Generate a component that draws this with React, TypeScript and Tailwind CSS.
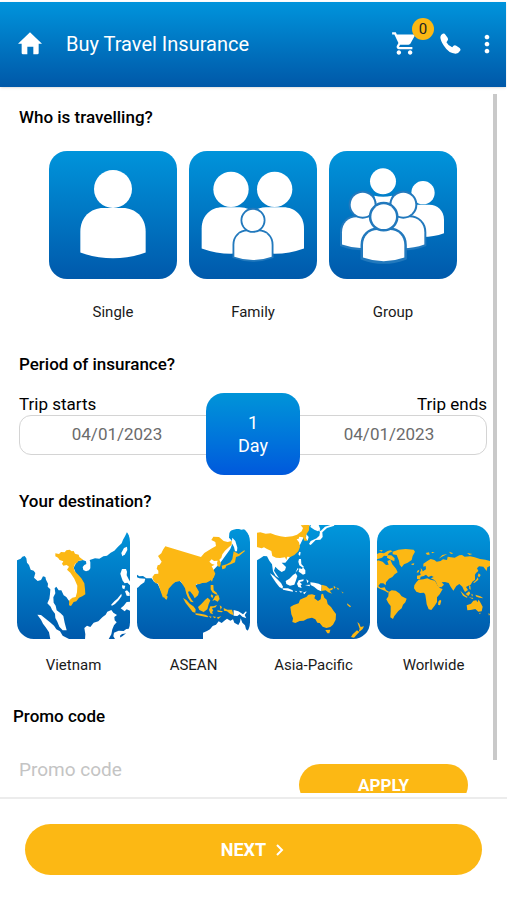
import React, { useState } from 'react';
import { MdMoreVert, MdShoppingCart } from 'react-icons/md';

const YELLOW = '#fcb814';
const OUTLINE = '#2279bd';

type PersonProps = {
  cx: number;
  headY: number;
  r: number;
  top: number;
  half: number;
  bottom: number;
  outline?: number;
};

function Person({ cx, headY, r, top, half, bottom, outline = 0 }: PersonProps) {
  const flat = half * 0.3;
  const shoulder = top + half * 0.72;
  const body = `M${cx - half} ${bottom - half * 0.18}V${shoulder}C${cx - half} ${top + half * 0.28} ${cx - half * 0.68} ${top} ${cx - flat} ${top}H${cx + flat}C${cx + half * 0.68} ${top} ${cx + half} ${top + half * 0.28} ${cx + half} ${shoulder}V${bottom - half * 0.18}Q${cx} ${bottom + half * 0.18} ${cx - half} ${bottom - half * 0.18}Z`;
  return (
    <g fill="#fff" stroke={OUTLINE} strokeWidth={outline} style={{ paintOrder: 'stroke' }}>
      <path d={body} />
      <circle cx={cx} cy={headY} r={r} />
    </g>
  );
}

const TRAVELLERS = [
  {
    label: 'Single',
    art: (
      <svg viewBox="28 32 384 384" className="block w-full">
        <Person cx={220} headY={146} r={57} top={203} half={98} bottom={354} />
      </svg>
    ),
  },
  {
    label: 'Family',
    art: (
      <svg viewBox="448 32 384 384" className="block w-full">
        <Person cx={574} headY={147} r={53} top={201} half={88} bottom={340} />
        <Person cx={705} headY={147} r={53} top={201} half={88} bottom={340} />
        <Person cx={640} headY={240} r={32} top={273} half={56} bottom={359} outline={11} />
      </svg>
    ),
  },
  {
    label: 'Group',
    art: (
      <svg viewBox="238 32 384 384" className="block w-full">
        <circle cx="400" cy="123" r="39" fill="#fff" />
        <path d="M374 166Q400 172 427 166L422 192H379Z" fill="#fff" />
        <Person cx={520} headY={157} r={35} top={193} half={63} bottom={290} />
        <Person cx={339} headY={193} r={36} top={231} half={62} bottom={324} outline={12} />
        <Person cx={461} headY={193} r={36} top={231} half={63} bottom={324} outline={12} />
        <Person cx={402} headY={229} r={37} top={269} half={62} bottom={363} outline={15} />
      </svg>
    ),
  },
];

const DESTINATIONS = [
  {
    label: 'Vietnam',
    art: (
      <>
        <path
          fill="#fff"
          d="M14 26H362V64L358 66 356 56 350 53 344 66 338 76 334 87 323 97 312 109 301 115 290 124 279 126 267 133 254 132 245 135 238 137 240 144 240 162 236 168 227 171 219 167 217 158 222 152 228 149 227 141 217 137 200 141 190 160 202 190 215 212 200 246 180 264 174 257 168 248 160 243 153 228 145 228 138 217 133 222 135 237 129 249 130 265 136 274 139 288 150 296 159 305 163 325 169 348 157 348 147 337 141 322 135 311 134 298 125 286 121 277 111 267 117 253 119 239 120 225 112 217 113 208 107 196 105 188 98 186 92 197 82 200 71 190 75 176 70 169 61 166 56 152 50 145 48 132 43 125 36 127 31 133 14 140Z"
        />
        <path
          fill={YELLOW}
          d="M135 117 146 119 152 113 163 114 168 108 178 106 184 111 190 110 194 118 205 121 207 128 219 137 205 139 200 146 194 148 190 160 193 171 205 183 214 193 222 207 224 224 225 240 216 246 206 250 198 261 190 263 182 275 176 273 177 258 186 250 196 248 200 234 201 214 192 193 180 175 170 166 176 157 169 152 159 154 155 148 159 141 148 137 143 130 135 126Z"
        />
        <g fill="#fff">
          <path d="M81 301 92 302 104 312 119 324 131 334 138 345 149 351 157 364 178 375H120L116 354 106 339 98 328 92 316Z" />
          <path d="M222 341 230 334 240 338 250 325 264 321 276 309 286 301 291 292 303 287 309 295 320 302 312 308 313 318 319 324 311 333 306 345 303 360 294 376H224L225 360Z" />
          <path d="M311 355 325 349 340 350 348 344 357 343 362 350 350 357 335 359 329 364 331 377H316L309 366Z" />
          <path d="M335 164 347 164 350 172 349 183 355 195 362 207V216L351 205 343 207 337 199 333 188 330 178Z" />
          <path d="M302 272 312 261 321 253 333 238 334 245 325 258 314 269 305 274Z" />
          <path d="M335 213 345 214 342 225 336 222ZM344 231 350 228 358 236V245L349 244ZM331 282 340 274 349 263 361 262V290L349 285 343 291Z" />
          <path d="M336 126 333 116 341 101 350 97 351 107 344 120Z" />
        </g>
      </>
    ),
  },
  {
    label: 'ASEAN',
    art: (
      <>
        <path
          fill="#fff"
          d="M14 26H312L304 45 297 56 296 70 303 78 307 85 300 104 270 145 235 182 205 208 182 218 160 212 148 199 137 201 118 211 108 222 96 238 82 208 71 202 64 192 48 192 38 185 27 186 18 180V188L27 192 45 193 42 204 31 211 24 219 14 224Z"
        />
        <path fill="#fff" d="M306 26H362V66L356 62 350 48 342 45 333 46 326 44 318 44 309 46 299 50 294 64Z" />
        <path fill="#fff" d="M306 70 315 80 321 100 320 111 314 111 311 98 304 85Z" />
        <path
          fill={YELLOW}
          d="M105 96 212 128 222 116 245 102 257 95 255 83 243 77 249 67 266 68 280 80 292 83 304 80 304 91 293 101 284 109 276 120 273 130 267 136 272 147 269 157 262 156 260 146 262 139 251 140 244 135 237 142 245 149 253 151 244 156 249 165 255 178 250 190 238 200 228 205 216 206 206 210 198 208 196 215 206 232 203 243 193 252 188 242 179 231 173 232 177 245 184 256 190 264 181 262 173 250 168 238 164 222 158 212 150 200 135 203 127 210 115 223 111 240 98 250 92 234 87 218 83 207 76 207 69 198 66 188 73 179 84 178 84 169 79 163 82 153 88 151 94 142 83 125 93 117 98 106Z"
        />
        <path fill={YELLOW} d="M98 245 106 240 112 247 109 256 105 254Z" />
        <g fill={YELLOW}>
          <path d="M310 111 325 119 342 108 344 110 326 125 317 128 314 144 301 150 288 154 285 162 276 165 274 154 289 150 300 144 306 134Z" />
          <path d="M245 188 249 189 245 202 241 196ZM241 212 249 212 250 228 259 235 262 242 254 239 246 234 241 225ZM243 240 249 244 246 252 241 245ZM255 244 264 242 268 254 262 262 253 257 246 260Z" />
          <path d="M158 251 168 257 178 268 189 276 196 285 195 295 187 293 176 279 166 266Z" />
          <path d="M203 278 213 269 224 257 232 250 240 258 235 270 231 285 220 293 207 287Z" />
          <path d="M195 297 210 298 225 301 234 306 231 309 210 304 196 301ZM235 305 244 307 241 311ZM247 306 258 308 252 312ZM260 309 273 306 263 315Z" />
          <path d="M240 276 249 276 260 272 256 279 245 281 249 290 245 292 248 300 240 297 236 286ZM268 273 275 278 271 286ZM280 281 291 286 305 286 310 303 300 299 290 291 281 289ZM261 288 278 291 274 294 262 292Z" />
        </g>
        <path fill="#fff" d="M310 287 324 291 338 300 347 291 349 294 343 302 348 312 336 307 328 300 321 305 310 304Z" />
        <path
          fill="#fff"
          d="M218 378V355L230 350 239 345 247 335 257 331 265 321 274 326 282 319 290 313 300 319 308 315 312 325 324 332 329 323 331 312 336 325 344 333 347 345 356 352 362 350V378Z"
        />
      </>
    ),
  },
  {
    label: 'Asia-Pacific',
    art: (
      <>
        <path fill="#fff" d="M14 26H182L170 48 150 90 105 145 94 145 107 158 104 168 94 173 84 166 75 157 71 169 79 181 86 192 76 185 68 171 65 150 57 139 50 126 40 125 30 132 14 141Z" />
        <path
          fill={YELLOW}
          d="M14 56 30 54 46 58 61 57 75 62 90 66 105 68 126 66 140 61 154 51 158 41 151 33 177 31 176 48 170 57 166 66 171 72 171 79 162 79 158 69 147 67 145 73 139 75 146 84 149 97 144 111 132 122 120 128 111 127 108 137 104 129 89 131 77 130 66 125 63 110 50 104 41 99 34 102 22 99 14 94Z"
        />
        <g fill="#fff">
          <path d="M183 26H198L205 32 210 45 203 51 192 46 180 38ZM168 60 175 68 172 79 167 72Z" />
          <path d="M203 45 211 50 224 37 250 29 252 34 230 41 216 54 217 68 210 76 196 77 187 86 181 92 176 89 181 80 199 72 207 64 209 53Z" />
          <path d="M147 112 151 114 149 125 144 120ZM146 134 152 134 153 149 161 158 158 160 147 153 144 142ZM147 162 155 164 158 159 165 168 165 178 158 181 151 176 145 172ZM142 161 145 164 135 175Z" />
          <path d="M59 177 70 184 81 195 92 206 98 217 96 223 87 218 77 205 67 190Z" />
          <path d="M106 200 117 193 128 182 136 177 141 185 137 198 132 211 119 214 108 209Z" />
          <path d="M97 222 113 222 127 228 128 232 112 229 98 226ZM133 229 140 231 138 234ZM146 229 157 232 151 235ZM158 235 169 231 162 240Z" />
          <path d="M145 198 160 195 159 200 148 203 155 210 151 213 154 221 144 218 140 208ZM168 195 175 200 171 207ZM164 212 179 211 178 216ZM180 204 192 205 205 208 214 213 213 231 202 226 191 217 181 212Z" />
        </g>
        <g fill={YELLOW}>
          <path d="M214 211 228 215 237 223 248 220 246 226 238 229 245 238 234 234 226 228 213 230ZM250 214 256 219 251 224ZM258 219 267 224 263 226ZM273 231 280 236 277 237ZM290 267 302 276 299 279 291 272Z" />
          <path d="M120 278 130 272 145 267 149 256 160 251 168 248 174 241 185 240 195 243 192 252 203 260 211 255 213 240 218 238 222 250 229 256 232 269 242 278 250 290 257 299 256 316 248 331 240 338 228 341 217 337 208 326 201 325 195 315 185 310 171 313 160 319 148 320 135 326 126 323 128 312 123 300Z" />
          <path d="M225 347 240 346 237 357 231 357Z" />
          <path d="M321 323 327 328 331 338 341 336 337 344 330 350 325 352 328 343ZM320 348 327 353 319 361 311 370 302 368 307 360Z" />
        </g>
      </>
    ),
  },
  {
    label: 'Worlwide',
    art: (
      <g fill={YELLOW}>
        <path d="M14 143 23 138 37 142 47 152 55 151 51 140 60 136 66 150 77 163 82 174 73 180 66 188 56 193 47 204 46 213 39 207 30 207 24 215 31 221 43 219 47 227 56 232 53 235 43 229 30 224 14 216Z" />
        <path d="M14 122 28 115 41 117 52 110 60 108 67 111 56 116 50 125 41 124 35 130 20 135 14 132ZM51 122 63 123 73 132 72 141 61 136 50 130ZM26 108 37 107 34 112Z" />
        <path d="M67 112 84 106 106 104 130 106 134 112 127 125 124 137 112 145 101 150 94 159 88 151 86 139 79 122 67 120ZM124 148 132 147 130 152 123 151Z" />
        <path d="M55 233 64 228 76 229 87 237 94 246 109 253 105 264 98 271 94 282 84 290 77 299 72 305 68 314 60 309 61 291 61 275 54 266 48 255 54 246Z" />
        <path d="M138 204 145 196 159 195 171 192 181 196 194 199 202 214 210 222 217 224 208 240 200 249 200 263 193 274 183 287 175 285 169 270 167 255 165 241 161 235 149 236 138 232 131 222 132 213ZM209 256 213 259 209 273 203 271 204 262Z" />
        <path d="M140 194 140 184 151 182 149 174 159 170 167 165 166 155 159 157 159 148 171 140 181 134 192 137 199 142 211 140 218 135 230 137 232 127 242 129 253 130 267 123 275 122 283 127 299 126 313 129 329 134 345 136 362 141V154L351 159 349 170 339 157 326 156 320 162 324 170 317 176 310 187 314 181 314 196 306 202 301 211 294 214 287 218 293 227 284 233 280 226 276 217 267 209 258 215 249 229 241 217 235 206 224 203 214 204 221 211 213 219 203 217 196 201 191 196 181 192 190 188 183 184 174 188 167 181 160 185 151 187 149 195Z" />
        <path d="M151 161 156 167 157 174 149 175 152 168ZM141 169 147 166 145 174 139 175ZM205 133 216 122 231 119 215 127ZM166 116 176 114 178 121 170 121ZM183 113 193 113 186 117ZM236 112 249 117 242 119ZM290 116 306 119 297 122Z" />
        <path d="M325 177 331 182 327 189 322 185ZM323 188 324 196 313 205 308 205 317 197ZM296 213 300 215 301 226 297 224ZM270 229 283 242 292 248 289 250 278 244ZM286 239 296 231 300 237 294 245ZM295 249 309 251 307 254ZM303 238 308 241 305 247ZM315 241 330 246 339 252 328 250 318 247Z" />
        <path d="M289 273 302 268 309 259 318 258 321 264 325 256 331 266 337 277 334 291 324 292 315 284 301 287 291 288ZM326 296 331 295 329 300ZM354 297 359 299 356 304Z" />
      </g>
    ),
  },
];

function TravellerTile({ label, art }: { label: string; art: React.ReactNode }) {
  return (
    <button type="button" className="flex w-32 flex-col items-center gap-[22px] text-[15px] leading-[22px] text-[#1a1a1a]">
      <span className="block w-full overflow-hidden rounded-[18px] bg-linear-to-b from-[#0094db] to-[#0059ab]">{art}</span>
      {label}
    </button>
  );
}

// the sea is the rounded tile itself, so land can run over its corners
function DestinationTile({ label, art }: { label: string; art: React.ReactNode }) {
  const seaId = `sea-${label}`;
  return (
    <button type="button" className="flex flex-col items-center gap-[15px] text-[15px] leading-[22px] text-[#1a1a1a]">
      <svg viewBox="20 32 339 342" className="block w-full">
        <defs>
          <linearGradient id={seaId} x1="0" y1="0" x2="0" y2="1">
            <stop offset="0" stopColor="#0097dc" />
            <stop offset="1" stopColor="#0059ab" />
          </linearGradient>
        </defs>
        <rect x="20" y="32" width="339" height="342" rx="50" fill={`url(#${seaId})`} />
        {art}
      </svg>
      {label}
    </button>
  );
}

export default function App() {
  const [start, setStart] = useState('04/01/2023');
  const [end, setEnd] = useState('04/01/2023');
  const [promo, setPromo] = useState('');

  return (
    <div className="flex h-dvh flex-col bg-white pt-0.5 font-['Roboto',sans-serif] text-black">
      {/* Header */}
      <header className="z-10 mr-px flex h-[85px] shrink-0 items-center bg-linear-to-b from-[#0094dc] to-[#0058a8] pr-[5px] pb-0.5 pl-[18px] text-white shadow-sm">
        <button type="button" aria-label="Home">
          <svg viewBox="55 96 72 69" className="block w-6" fill="currentColor">
            <path d="M91 97 127 131H117V159Q117 163 113 163H101V140H83V163H70Q66 163 66 159V131H55Z" />
          </svg>
        </button>
        <h1 className="ml-6 flex-1 text-xl">Buy Travel Insurance</h1>
        <button type="button" aria-label="Cart" className="relative">
          <MdShoppingCart size={27} />
          <span className="absolute -top-3 -right-4 flex size-[22px] items-center justify-center rounded-full bg-[#fcb814] text-[15px] text-[#222]">0</span>
        </button>
        <button type="button" aria-label="Call" className="ml-[22px]">
          <svg viewBox="164 53 62 62" className="block w-[21px]" fill="currentColor">
            <path d="M172 55Q177 53 180 58L187 68Q189 73 186 76L183 80Q188 90 200 95L204 91Q208 88 212 91L222 97Q226 101 224 105Q220 113 210 114Q190 114 175 90Q165 75 165 65Q166 58 172 55Z" />
          </svg>
        </button>
        <button type="button" aria-label="More" className="ml-3">
          <MdMoreVert size={28} />
        </button>
      </header>

      {/* Form */}
      <main className="relative min-h-0 flex-1 overflow-hidden">
        <div className="absolute top-[7px] right-[10px] bottom-[33px] w-1 bg-[#c9c9c9]" />

        <section className="pt-[18px] pr-5 pl-[19px]">
          <h2 className="text-[17px] leading-6 font-medium">Who is travelling?</h2>
          <div className="mt-[22px] flex justify-center gap-3">
            {TRAVELLERS.map((t) => (
              <TravellerTile key={t.label} label={t.label} art={t.art} />
            ))}
          </div>
        </section>

        <section className="pt-[29px] pr-5 pl-[19px]">
          <h2 className="text-[17px] leading-6 font-medium">Period of insurance?</h2>
          <div className="relative mt-[17px]">
            <div className="flex justify-between text-[17px] leading-[22px]">
              <label htmlFor="start">Trip starts</label>
              <label htmlFor="end">Trip ends</label>
            </div>
            <div className="flex h-10 justify-between rounded-xl border border-[#d4d4d4] text-[17px] text-[#6b6b6b]">
              <input id="start" value={start} onChange={(e) => setStart(e.target.value)} className="w-[194px] bg-transparent text-center outline-none" />
              <input id="end" value={end} onChange={(e) => setEnd(e.target.value)} className="w-[194px] bg-transparent text-center outline-none" />
            </div>
            <div className="absolute top-0 left-1/2 flex h-[82px] w-[94px] -translate-x-1/2 flex-col items-center justify-center rounded-[18px] bg-linear-to-b from-[#0094d8] to-[#0058dc] text-lg leading-[23px] text-white">
              <span>1</span>
              <span>Day</span>
            </div>
          </div>
        </section>

        <section className="px-[17px] pt-[34px]">
          <h2 className="pl-0.5 text-[17px] leading-6 font-medium">Your destination?</h2>
          <div className="mt-3 grid grid-cols-4 gap-[7px]">
            {DESTINATIONS.map((d) => (
              <DestinationTile key={d.label} label={d.label} art={d.art} />
            ))}
          </div>
        </section>

        <section className="pt-7 pr-[39px] pl-[13px]">
          <h2 className="text-[17px] leading-6 font-medium">
            <label htmlFor="promo">Promo code</label>
          </h2>
          <div className="mt-[26px] flex items-start justify-between pl-1.5">
            <input
              id="promo"
              value={promo}
              onChange={(e) => setPromo(e.target.value)}
              placeholder="Promo code"
              className="w-52 bg-transparent text-[19px] leading-8 outline-none placeholder:text-[#c4c4c4]"
            />
            <button type="button" className="mt-[10px] h-[42px] w-[169px] rounded-full bg-[#fcb814] text-[17px] leading-5 font-bold text-white">
              APPLY
            </button>
          </div>
        </section>
      </main>

      {/* Footer */}
      <footer className="mt-1 shrink-0 border-t-2 border-[#ececec] px-[25px] pt-[25px] pb-[25px]">
        <button type="button" className="flex h-[51px] w-full items-center justify-center gap-2 rounded-full bg-[#fcb814] text-lg font-bold text-white">
          NEXT
          <svg viewBox="0 0 12 16" className="h-4 w-3" fill="none" stroke="currentColor" strokeWidth="2">
            <path d="M3 3l5 5-5 5" />
          </svg>
        </button>
      </footer>
    </div>
  );
}
